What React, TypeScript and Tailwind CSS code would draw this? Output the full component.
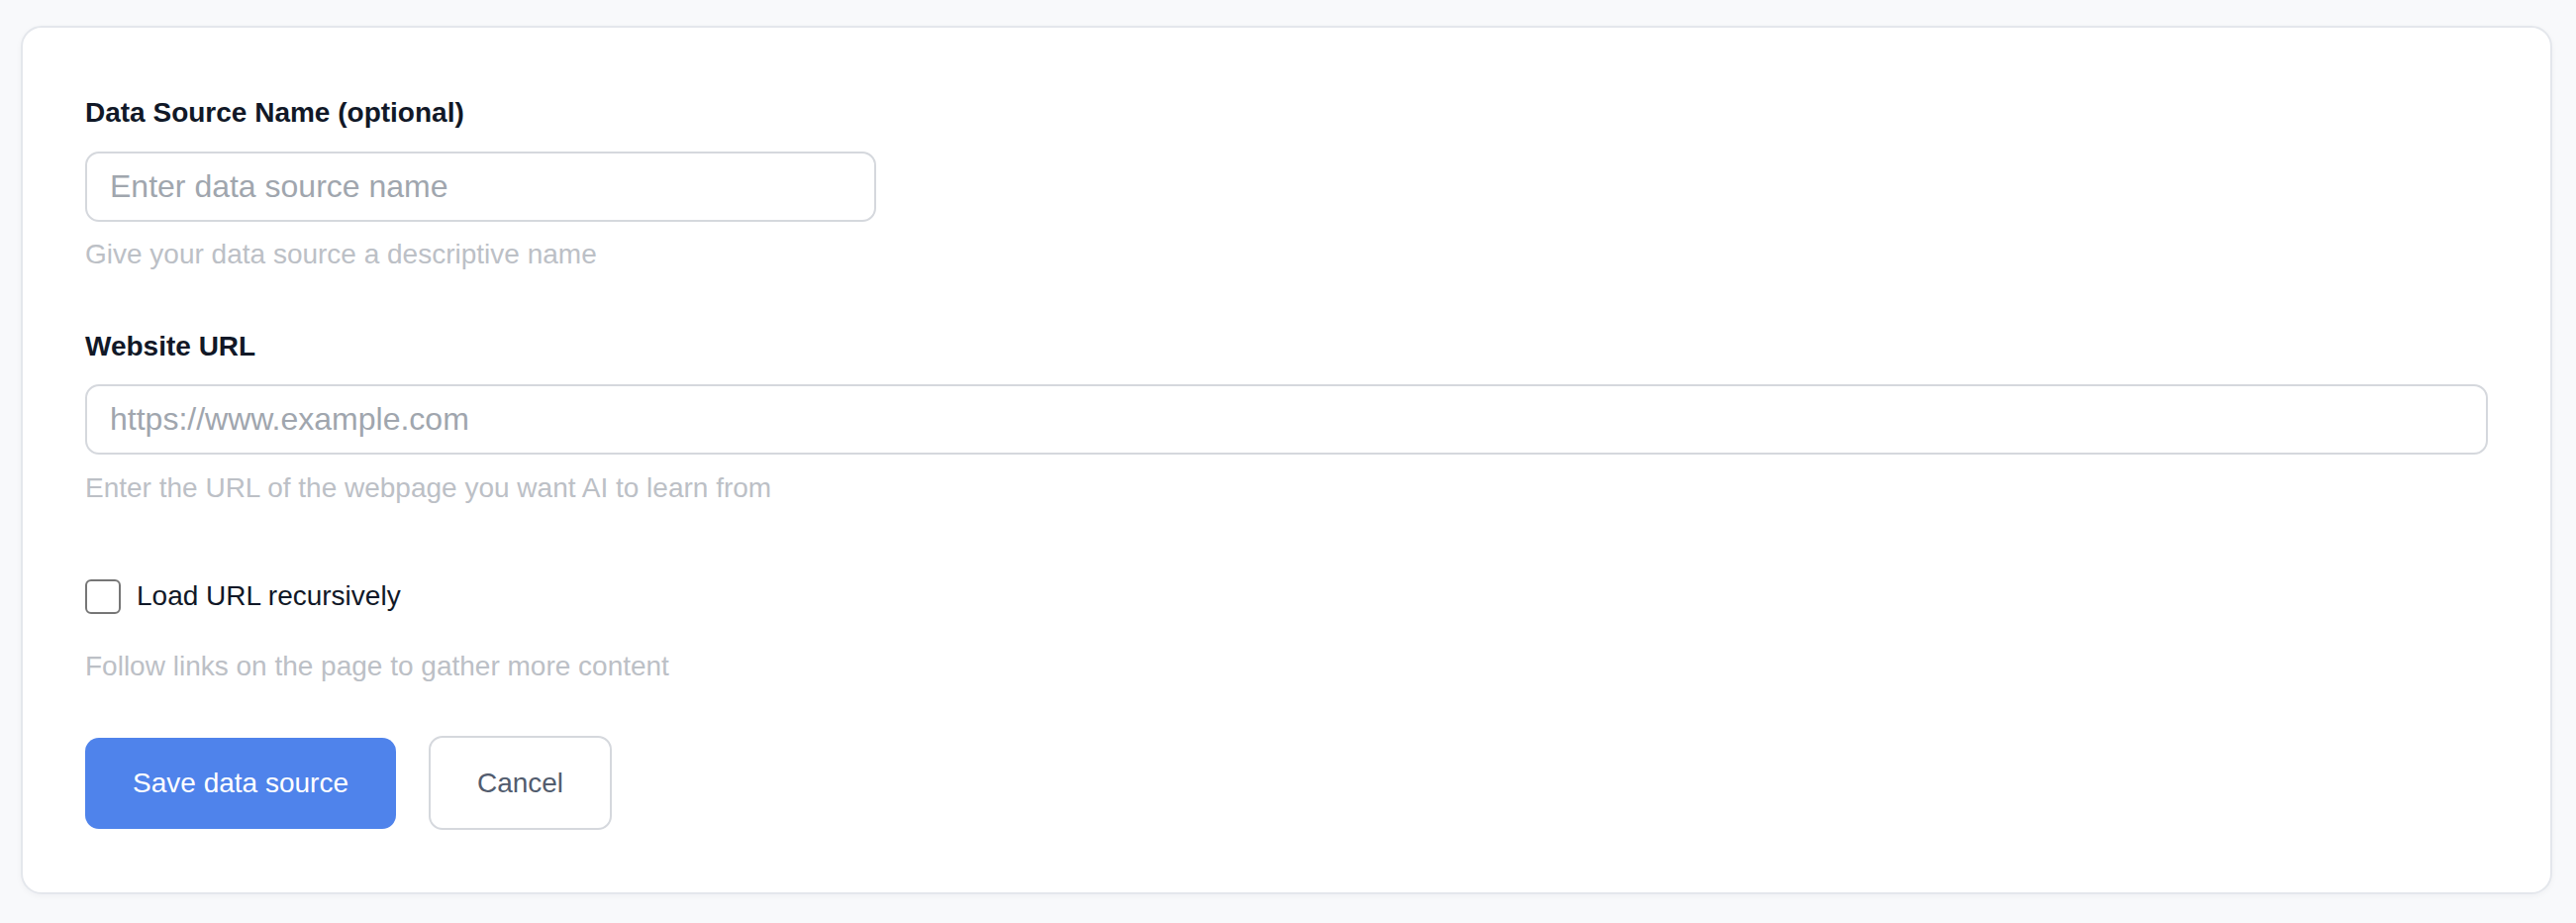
import React, { useState } from "react";

export default function App() {
  const [recursive, setRecursive] = useState(false);

  return (
    <div className="min-h-[932px] bg-[#f8f9fb] pt-[26px] pb-[29px] pl-[21px] pr-[24px] font-['Liberation_Sans',Arial,sans-serif]">
      <div className="rounded-[21px] border-2 border-[#e4e7ec] bg-white px-[63px] pt-[65px] pb-[63px] shadow-[0_2px_6px_rgba(16,24,40,0.04)]">
        {/* Name */}
        <label className="block text-[28px] leading-[42px] font-bold text-[#111827]">
          Data Source Name (optional)
        </label>
        <input
          type="text"
          placeholder="Enter data source name"
          className="mt-[18px] block h-[71px] w-[799px] rounded-[14px] border-2 border-[#d5d8dd] bg-white px-[23px] text-[32px] text-[#111827] outline-none placeholder:text-[#a0a6ae]"
        />
        <p className="mt-[12px] text-[28px] leading-[42px] text-[#bcc0c6]">
          Give your data source a descriptive name
        </p>

        {/* URL */}
        <label className="mt-[51px] block text-[28px] leading-[42px] font-bold text-[#111827]">
          Website URL
        </label>
        <input
          type="text"
          placeholder="https://www.example.com"
          className="mt-[17px] block h-[71px] w-full rounded-[14px] border-2 border-[#d5d8dd] bg-white px-[23px] text-[32px] text-[#111827] outline-none placeholder:text-[#a0a6ae]"
        />
        <p className="mt-[13px] text-[28px] leading-[42px] text-[#bcc0c6]">
          Enter the URL of the webpage you want AI to learn from
        </p>

        {/* Recursive */}
        <label className="mt-[67px] flex h-[42px] cursor-pointer items-center gap-[16px]">
          <span
            onClick={() => setRecursive(!recursive)}
            className={
              recursive
                ? "flex h-[35px] w-[36px] items-center justify-center rounded-[6px] border-2 border-[#4f83eb] bg-[#4f83eb]"
                : "flex h-[35px] w-[36px] items-center justify-center rounded-[6px] border-2 border-[#767676] bg-white"
            }
          >
            {recursive && (
              <svg width="22" height="22" viewBox="0 0 24 24" fill="none" stroke="white" strokeWidth="3">
                <path d="M5 12l5 5 9-10" />
              </svg>
            )}
          </span>
          <span className="text-[28px] leading-[42px] text-[#111827]">Load URL recursively</span>
        </label>
        <p className="mt-[29px] text-[28px] leading-[42px] text-[#bcc0c6]">
          Follow links on the page to gather more content
        </p>

        {/* Actions */}
        <div className="mt-[49px] flex items-center gap-[33px]">
          <button className="flex h-[92px] w-[314px] items-center justify-center rounded-[14px] bg-[#4f83eb] text-[28px] text-white">
            Save data source
          </button>
          <button className="flex h-[95px] w-[185px] items-center justify-center rounded-[14px] border-2 border-[#d5d8dd] bg-white text-[28px] text-[#525c6e]">
            Cancel
          </button>
        </div>
      </div>
    </div>
  );
}
